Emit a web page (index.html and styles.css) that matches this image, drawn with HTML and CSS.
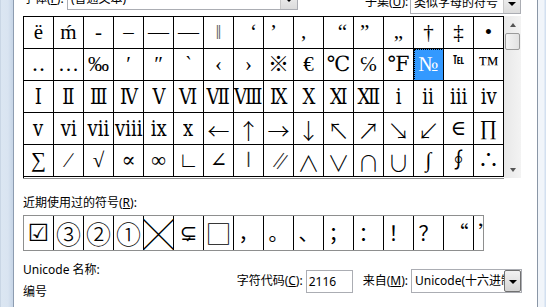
FILE: index.html
```html
<!DOCTYPE html>
<html lang="zh-CN">
<head>
<meta charset="utf-8">
<title>符号</title>
<link rel="stylesheet" href="styles.css">
</head>
<body>
<div class="frame-l"></div>
<div class="content">
  <div class="toprow">
    <span class="lbl lbl-font">字体(<u>F</u>):</span>
    <div class="combo combo-font"><span class="combo-text">(普通文本)</span><span class="dd"><i class="tri"></i></span></div>
    <span class="lbl lbl-sub">子集(<u>U</u>):</span>
    <div class="combo combo-sub"><span class="combo-text">类似字母的符号</span><span class="dd"><i class="tri"></i></span></div>
  </div>

  <div class="gridwrap">
    <div class="grid">
      <div class="c">ë</div><div class="c">ḿ</div><div class="c">-</div><div class="c">–</div><div class="c">—</div><div class="c">―</div><div class="c thin">‖</div><div class="c r">‘</div><div class="c l">’</div><div class="c l low">‚</div><div class="c r">“</div><div class="c l">”</div><div class="c low">„</div><div class="c">†</div><div class="c">‡</div><div class="c">•</div>

      <div class="c">‥</div><div class="c">…</div><div class="c">‰</div><div class="c">′</div><div class="c">″</div><div class="c">‵</div><div class="c">‹</div><div class="c">›</div><div class="c">※</div><div class="c">€</div><div class="c">℃</div><div class="c">℅</div><div class="c">℉</div><div class="c sel">№</div><div class="c tel">℡</div><div class="c">™</div>

      <div class="c rn"><span>Ⅰ</span></div><div class="c rn"><span>Ⅱ</span></div><div class="c rn"><span>Ⅲ</span></div><div class="c rn"><span>Ⅳ</span></div><div class="c rn"><span>Ⅴ</span></div><div class="c rn"><span>Ⅵ</span></div><div class="c rn"><span>Ⅶ</span></div><div class="c rn"><span>Ⅷ</span></div><div class="c rn"><span>Ⅸ</span></div><div class="c rn"><span>Ⅹ</span></div><div class="c rn"><span>Ⅺ</span></div><div class="c rn"><span>Ⅻ</span></div><div class="c rn"><span>ⅰ</span></div><div class="c rn"><span>ⅱ</span></div><div class="c rn"><span>ⅲ</span></div><div class="c rn"><span>ⅳ</span></div>

      <div class="c rn"><span>ⅴ</span></div><div class="c rn"><span>ⅵ</span></div><div class="c rn"><span>ⅶ</span></div><div class="c rn"><span>ⅷ</span></div><div class="c rn"><span>ⅸ</span></div><div class="c rn"><span>ⅹ</span></div><div class="c ar">←&#xFE0E;</div><div class="c ar">↑&#xFE0E;</div><div class="c ar">→&#xFE0E;</div><div class="c ar">↓&#xFE0E;</div><div class="c ar">↖&#xFE0E;</div><div class="c ar">↗&#xFE0E;</div><div class="c ar">↘&#xFE0E;</div><div class="c ar">↙&#xFE0E;</div><div class="c">∈</div><div class="c">∏</div>

      <div class="c">∑</div><div class="c">∕</div><div class="c">√</div><div class="c">∝</div><div class="c">∞</div><div class="c">∟</div><div class="c">∠</div><div class="c thinbar">∣</div><div class="c par">∥</div><div class="c lt">∧</div><div class="c lt">∨</div><div class="c lt">∩</div><div class="c lt">∪</div><div class="c">∫</div><div class="c">∮</div><div class="c">∴</div>
    </div>
    <div class="sbar">
      <span class="sarrow up"></span>
      <span class="thumb"></span>
      <span class="sarrow down"></span>
    </div>
  </div>

  <div class="lbl recent-lbl">近期使用过的符号(<u>R</u>):</div>
  <div class="recent">
    <div class="rc chk">☑</div><div class="rc circ">③</div><div class="rc circ">②</div><div class="rc circ">①</div><div class="rc big">╳</div><div class="rc">⊊</div><div class="rc sq">□</div><div class="rc cjk">，</div><div class="rc cjk">。</div><div class="rc cjk">、</div><div class="rc cjk">；</div><div class="rc cjk">：</div><div class="rc cjk">！</div><div class="rc cjk">？</div><div class="rc cjk">“</div><div class="rc cjk">”</div>
  </div>

  <div class="inforow">
    <div class="infocol">
      <div class="lbl">Unicode 名称:</div>
      <div class="lbl">编号</div>
    </div>
    <div class="codegroup">
      <span class="lbl">字符代码(<u>C</u>):</span>
      <span class="input">2116</span>
      <span class="lbl from">来自(<u>M</u>):</span>
      <div class="combo combo-from"><span class="combo-text">Unicode(十六进制)</span><span class="dd btn"><i class="tri"></i></span></div>
    </div>
  </div>

  <div class="btnrow">
    <span class="button b1"></span>
    <span class="button b2"></span>
  </div>
</div>
<div class="frame-r"></div>
</body>
</html>
```

FILE: styles.css
```css
html, body {
  margin: 0;
  padding: 0;
}
body {
  width: 546px;
  height: 307px;
  overflow: hidden;
  display: flex;
  align-items: stretch;
  background: #fff;
  font-family: "Noto Sans", "Noto Sans CJK SC", sans-serif;
  font-size: 12px;
  color: #000;
}
u { text-decoration: underline; text-underline-offset: 1px; }

.frame-l {
  width: 13px;
  flex: none;
  background: linear-gradient(to right, #b7c6d8 0, #dbe6f2 1px, #d9e4f1 8px, #c9d7e8 12px);
  border-right: 1px solid #8d9cb0;
}
.frame-r {
  width: 16px;
  flex: none;
  background: linear-gradient(to right, #f1f5fa 0, #f1f5fa 6px, #d3e0f0 7px, #cfdcee 100%);
}
.content {
  width: 514px;
  flex: none;
  border-right: 1px solid #8a96a6;
  padding-left: 9px;
  box-sizing: content-box;
  display: flex;
  flex-direction: column;
  align-items: flex-start;
  overflow: hidden;
}
.content > * { flex-shrink: 0; }

/* top row (cut off by the top edge) */
.toprow {
  height: 16px;
  width: 100%;
  display: flex;
  align-items: flex-start;
}
.lbl {
  line-height: 16px;
  white-space: nowrap;
  font-family: "Noto Sans", "Noto Sans CJK SC", sans-serif;
}
.lbl-font { margin-top: -9px; width: 44px; }
.combo {
  display: flex;
  align-items: center;
  border: 1px solid #abadb3;
  background: #fff;
  box-sizing: border-box;
  overflow: hidden;
}
.combo-text {
  flex: 1;
  padding-left: 3px;
  white-space: nowrap;
  overflow: hidden;
  line-height: 18px;
}
.combo-font { width: 231px; height: 22px; margin-top: -12px; }
.lbl-sub { margin-left: 67px; margin-top: -6px; width: 45px; }
.combo-sub { width: 111px; height: 22px; margin-top: -8px; }
.dd {
  width: 17px;
  height: 100%;
  flex: none;
  display: flex;
  align-items: center;
  justify-content: center;
  box-sizing: border-box;
  border-left: 1px solid #c8c8c8;
  background: linear-gradient(#f4f4f4, #dcdcdc);
}
.tri {
  width: 0;
  height: 0;
  border-left: 4px solid transparent;
  border-right: 4px solid transparent;
  border-top: 4px solid #000;
  margin-top: 1px;
}

/* symbol grid */
.gridwrap {
  display: flex;
}
.grid {
  display: grid;
  grid-template-columns: repeat(16, 30px);
  grid-auto-rows: 32px;
  border-left: 1px solid #000;
  border-top: 1px solid #000;
  box-shadow: 0 1px 0 #8c8c8c;
}
.c {
  box-sizing: border-box;
  border-right: 1px solid #000;
  border-bottom: 1px solid #000;
  display: flex;
  align-items: center;
  justify-content: center;
  font-family: "Liberation Serif", "DejaVu Serif", "Noto Sans CJK SC", serif;
  font-size: 21px;
  line-height: 1;
  overflow: hidden;
}
.c.r { justify-content: flex-end; padding-right: 6px; }
.c.l { justify-content: flex-start; padding-left: 6px; }
.c.low { align-items: flex-end; padding-bottom: 6px; }
.c.thin { color: #666; }
.c.thinbar { font-family: "DejaVu Sans", sans-serif; font-weight: 300; color: #333; }
.c.par { font-family: "Noto Sans CJK SC", sans-serif; font-weight: 300; font-style: italic; color: #222; }
.c.lt { font-family: "Noto Sans CJK SC", sans-serif; font-weight: 300; font-size: 22px; }
.c.ar { font-family: "Noto Sans CJK SC", "DejaVu Sans", sans-serif; font-size: 22px; font-weight: 300; }
.c.rn { font-family: "Liberation Serif", "DejaVu Serif", serif; font-size: 22px; }
.c.rn span { display: inline-block; transform: scaleX(0.82); white-space: nowrap; }
.c.tel { font-size: 11px; align-items: flex-start; padding-top: 6px; font-weight: bold; }
.c.sel {
  background: #3399ff;
  color: #fff;
  outline: 1px dotted #000;
  outline-offset: -1px;
}

.sbar {
  width: 17px;
  height: 162px;
  background: linear-gradient(to right, #e8e8e8, #f3f3f3);
  display: flex;
  flex-direction: column;
  align-items: center;
}
.sarrow {
  width: 0;
  height: 0;
  border-left: 3px solid transparent;
  border-right: 3px solid transparent;
}
.sarrow.up { border-bottom: 4px solid #555; margin-top: 7px; }
.sarrow.down { border-top: 4px solid #555; margin-top: auto; margin-bottom: 6px; }
.thumb {
  width: 15px;
  height: 17px;
  margin-top: 6px;
  box-sizing: border-box;
  border: 1px solid #9b9b9b;
  border-radius: 2px;
  background: linear-gradient(to right, #f4f4f4, #e2e2e2);
}

/* recent */
.recent-lbl { margin-top: 17px; }
.recent {
  margin-top: 4px;
  width: 461px;
  height: 36px;
  box-sizing: border-box;
  border: 1px solid #8e8f8f;
  display: flex;
  overflow: hidden;
}
.rc {
  flex: none;
  width: 30px;
  height: 34px;
  box-sizing: border-box;
  border-right: 1px solid #000;
  display: flex;
  align-items: center;
  justify-content: center;
  font-family: "DejaVu Sans", "Liberation Serif", "Noto Sans CJK SC", serif;
  font-size: 21px;
  line-height: 1;
  overflow: hidden;
}
.rc.chk { font-size: 24px; }
.rc.circ { font-family: "Noto Sans CJK SC", sans-serif; font-size: 25px; font-weight: 300; }
.rc.sq { font-family: "Noto Sans CJK SC", sans-serif; font-size: 26px; font-weight: 300; }
.rc.big { font-size: 33px; font-family: "Noto Sans CJK SC", sans-serif; font-weight: 300; }
.rc.cjk { font-family: "Noto Sans CJK SC", sans-serif; font-size: 20px; }

/* info row */
.inforow {
  margin-top: 8px;
  width: 499px;
  display: flex;
  align-items: center;
}
.infocol .lbl { line-height: 22px; }
.codegroup {
  margin-left: auto;
  display: flex;
  align-items: center;
}
.input {
  width: 47px;
  height: 23px;
  box-sizing: border-box;
  border: 1px solid #abadb3;
  margin-left: 3px;
  padding-left: 2px;
  line-height: 21px;
  font-family: "Noto Sans", sans-serif;
}
.from { margin-left: 10px; }
.combo-from { width: 111px; height: 24px; margin-left: 3px; }
.dd.btn {
  width: 17px;
  height: 22px;
  border: 1px solid #707070;
  border-radius: 2px;
  background: linear-gradient(#f2f2f2, #d5d5d5);
}

.btnrow {
  margin-top: 4px;
  display: flex;
}
.button {
  height: 23px;
  box-sizing: border-box;
  border: 1px solid #707070;
  border-radius: 3px;
  background: linear-gradient(#f2f2f2, #dddddd);
}
.b1 { width: 90px; }
.b2 { width: 78px; margin-left: 10px; }
```
